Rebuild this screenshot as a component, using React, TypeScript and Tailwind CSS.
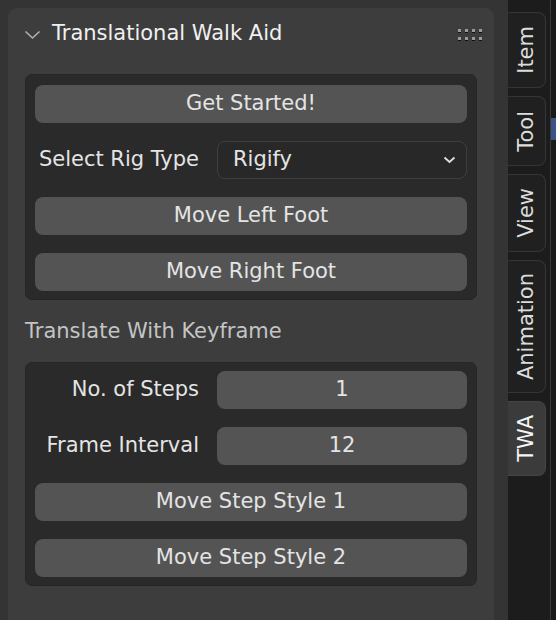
import { ReactNode } from 'react'

const FONT = '"DejaVu Sans", "Liberation Sans", sans-serif'

const TABS = [
  ['Item', 'h-[76px]', false],
  ['Tool', 'h-[70px]', false],
  ['View', 'h-[78px]', false],
  ['Animation', 'h-[133px]', false],
  ['TWA', 'h-[75px]', true],
] as const

function Btn({ children }: { children: ReactNode }) {
  return (
    <div className="h-[38px] rounded-[8px] bg-[#545454] flex items-center justify-center text-[21px] text-[#e4e4e4]">
      {children}
    </div>
  )
}

function Row({ label, children }: { label: string; children: ReactNode }) {
  return (
    <div className="flex items-center h-[38px]">
      <div className="w-[182px] pr-[18px] text-right text-[21px] text-[#e4e4e4] whitespace-nowrap">{label}</div>
      <div className="flex-1 h-full">{children}</div>
    </div>
  )
}

function Box({ children }: { children: ReactNode }) {
  return (
    <div className="rounded-[7px] bg-[#2a2a2a] border border-[#262626] px-[9px] pt-[10px] pb-[8px] flex flex-col gap-[18px]">
      {children}
    </div>
  )
}

export default function App() {
  return (
    <div className="w-[556px] h-[620px] flex overflow-hidden bg-[#333333]" style={{ fontFamily: FONT }}>
      {/* sidebar region */}
      <div className="w-[508px] h-full pl-[8px] pr-[14px] pt-[8px] bg-[#343434]">
        <div className="h-full rounded-t-[9px] bg-[#3d3d3d]">
          {/* header */}
          <div className="h-[51px] flex items-center pl-[16px] pr-[10px] pt-[1px]">
            <svg width="17" height="10" viewBox="0 0 17 10" className="mr-[11px] mt-[1px]">
              <path d="M1.5 1.5 L8.5 8 L15.5 1.5" fill="none" stroke="#b0b0b0" strokeWidth="1.6" />
            </svg>
            <span className="text-[21px] text-[#f0f0f0] flex-1">Translational Walk Aid</span>
            <div className="grid grid-cols-4 gap-x-[4px] gap-y-[5px] mr-[2px]">
              {Array.from({ length: 8 }).map((_, i) => (
                <div key={i} className="w-[3px] h-[3px] bg-[#9a9a9a] shadow-[0_1px_0_#111]" />
              ))}
            </div>
          </div>

          <div className="px-[17px] pt-[15px]">
            <Box>
              <Btn>Get Started!</Btn>
              <Row label="Select Rig Type">
                <div className="h-full rounded-[8px] bg-[#282828] border border-[#3e3e3e] flex items-center pl-[15px] pr-[10px] text-[21px] text-[#e4e4e4]">
                  <span className="flex-1">Rigify</span>
                  <svg width="13" height="8" viewBox="0 0 13 8">
                    <path d="M1.5 1.5 L6.5 6 L11.5 1.5" fill="none" stroke="#e0e0e0" strokeWidth="1.8" />
                  </svg>
                </div>
              </Row>
              <Btn>Move Left Foot</Btn>
              <Btn>Move Right Foot</Btn>
            </Box>

            <div className="h-[62px] pt-[2px] flex items-center text-[21px] text-[#c4c4c4]">Translate With Keyframe</div>

            <div className="rounded-[7px] bg-[#2a2a2a] border border-[#262626] px-[9px] pt-[8px] pb-[8px] flex flex-col gap-[18px]">
              <Row label="No. of Steps">
                <Btn>1</Btn>
              </Row>
              <Row label="Frame Interval">
                <Btn>12</Btn>
              </Row>
              <Btn>Move Step Style 1</Btn>
              <Btn>Move Step Style 2</Btn>
            </div>
          </div>
        </div>
      </div>

      {/* tab column */}
      <div className="w-[42px] h-full bg-[#1c1c1c] flex flex-col pt-[12px] gap-[8px]">
        {TABS.map(([name, h, active]) => (
          <div
            key={name}
            className={`${h} w-[38px] rounded-r-[8px] border border-l-0 flex items-center justify-center ${
              active ? 'bg-[#3b3b3b] border-[#444444] text-[#f4f4f4]' : 'bg-[#202020] border-[#353535] text-[#dcdcdc]'
            }`}
          >
            <span className="[writing-mode:vertical-rl] rotate-180 text-[21px] leading-none">{name}</span>
          </div>
        ))}
      </div>

      {/* right edge */}
      <div className="w-[6px] h-full bg-[#1a1a1a] border-l border-[#3a3a3a] pt-[118px]">
        <div className="h-[22px] bg-[#3a5488]" />
      </div>
    </div>
  )
}
